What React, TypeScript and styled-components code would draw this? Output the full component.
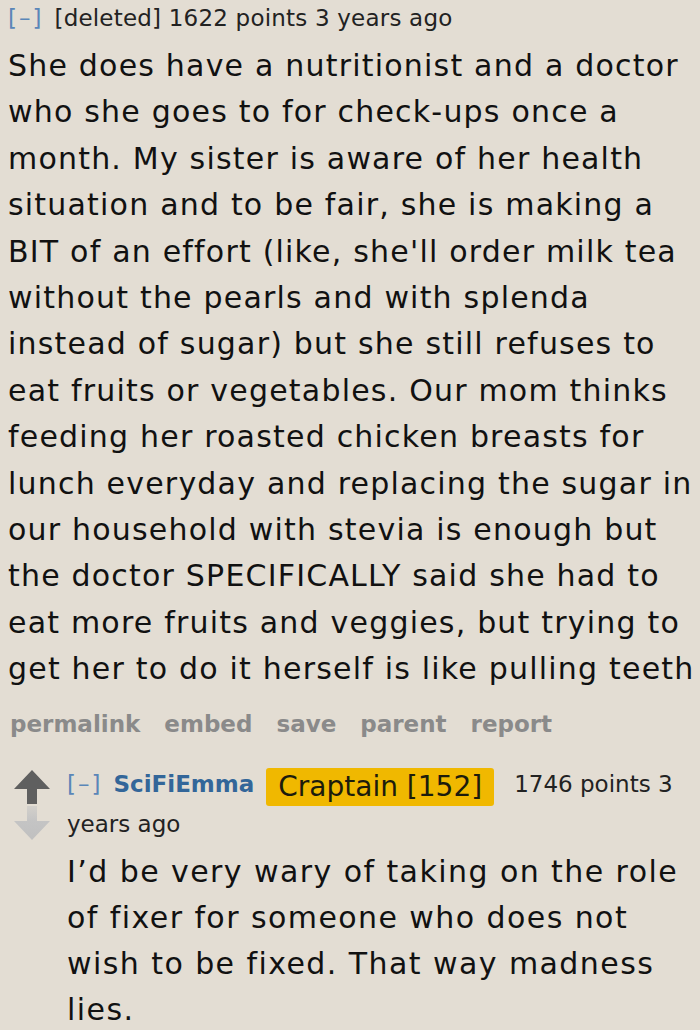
import React from 'react';
import styled, { createGlobalStyle } from 'styled-components';

const GlobalStyle = createGlobalStyle`
  html, body {
    margin: 0;
    padding: 0;
    background: #e3ddd3;
  }
  body {
    font-family: "DejaVu Sans", Verdana, sans-serif;
    color: #111;
  }
`;

const Page = styled.div`
  width: 700px;
  height: 1030px;
  overflow: hidden;
  background: #e3ddd3;
`;

const Comment = styled.div`
  padding: 0 0 0 8px;
`;

const Tagline = styled.div`
  font-size: 23px;
  letter-spacing: 0.2px;
  line-height: 36px;
  color: #222;
  white-space: nowrap;
`;

const Toggle = styled.span`
  color: #5a86b8;
  letter-spacing: 2px;
  margin-right: 11px;
`;

const Body = styled.div<{ $spacing?: number }>`
  font-size: 30px;
  letter-spacing: ${(p) => p.$spacing ?? 1.2}px;
  line-height: 46.4px;
  color: #111;
  margin-top: 7px;
`;

const Line = styled.div`
  white-space: nowrap;
`;

const Buttons = styled.ul`
  list-style: none;
  display: flex;
  gap: 24px;
  margin: 16px 0 0 2px;
  padding: 0;
  font-size: 23px;
  line-height: 30px;
  font-weight: bold;
  color: #8a8a8a;
`;

const Child = styled.div`
  display: flex;
  margin-top: 26px;
  padding-left: 14px;
`;

const Votes = styled.div`
  display: flex;
  flex-direction: column;
  align-items: center;
  width: 36px;
  padding-top: 5px;
  gap: 2px;
`;

const Entry = styled.div`
  flex: 1;
  padding-left: 17px;
  padding-right: 6px;
`;

const ChildTagline = styled.div`
  font-size: 23px;
  line-height: 37px;
  color: #222;
  margin-top: 1px;
`;

const TagRow = styled.div`
  white-space: nowrap;
`;

const Author = styled.span`
  font-weight: bold;
  color: #336699;
  margin-right: 12px;
`;

const Flair = styled.span`
  display: inline-block;
  background: #f0b800;
  color: #1c1c0c;
  font-size: 28px;
  line-height: 38px;
  padding: 0 12px;
  border-radius: 3px;
  margin-right: 20px;
  vertical-align: -4px;
`;

const ChildBody = styled(Body)`
  margin-top: 6px;
  line-height: 46px;
`;

const Arrow = ({ up }: { up?: boolean }) => (
  <svg width="36" height="34" viewBox="0 0 36 34">
    <defs>
      <linearGradient id="downFade" x1="0" y1="0" x2="0" y2="1">
        <stop offset="0" stopColor="#d3d0cb" />
        <stop offset="0.45" stopColor="#c4c4c4" />
        <stop offset="1" stopColor="#c0c0c0" />
      </linearGradient>
    </defs>
    {up ? (
      <path d="M18 0 L36 19 L23 19 L23 34 L13 34 L13 19 L0 19 Z" fill="#5f5f5f" />
    ) : (
      <path d="M13 0 L23 0 L23 15 L36 15 L18 34 L0 15 L13 15 Z" fill="url(#downFade)" />
    )}
  </svg>
);

const parentLines = [
  'She does have a nutritionist and a doctor',
  'who she goes to for check-ups once a',
  'month. My sister is aware of her health',
  'situation and to be fair, she is making a',
  "BIT of an effort (like, she'll order milk tea",
  'without the pearls and with splenda',
  'instead of sugar) but she still refuses to',
  'eat fruits or vegetables. Our mom thinks',
  'feeding her roasted chicken breasts for',
  'lunch everyday and replacing the sugar in',
  'our household with stevia is enough but',
  'the doctor SPECIFICALLY said she had to',
  'eat more fruits and veggies, but trying to',
  'get her to do it herself is like pulling teeth',
];

const childLines = [
  'I’d be very wary of taking on the role',
  'of fixer for someone who does not',
  'wish to be fixed. That way madness',
  'lies.',
];

const actions = ['permalink', 'embed', 'save', 'parent', 'report'];

export default function App() {
  return (
    <Page>
      <GlobalStyle />
      <Comment>
        <Tagline>
          <Toggle>[–]</Toggle>[deleted] 1622 points 3 years ago
        </Tagline>
        <Body>
          {parentLines.map((l) => (
            <Line key={l}>{l}</Line>
          ))}
        </Body>
        <Buttons>
          {actions.map((a) => (
            <li key={a}>{a}</li>
          ))}
        </Buttons>
      </Comment>
      <Child>
        <Votes>
          <Arrow up />
          <Arrow />
        </Votes>
        <Entry>
          <ChildTagline>
            <TagRow>
              <Toggle>[–]</Toggle>
              <Author>SciFiEmma</Author>
              <Flair>Craptain [152]</Flair>
              <span>1746 points 3</span>
            </TagRow>
            <TagRow>years ago</TagRow>
          </ChildTagline>
          <ChildBody $spacing={1.43}>
            {childLines.map((l) => (
              <Line key={l}>{l}</Line>
            ))}
          </ChildBody>
        </Entry>
      </Child>
    </Page>
  );
}
